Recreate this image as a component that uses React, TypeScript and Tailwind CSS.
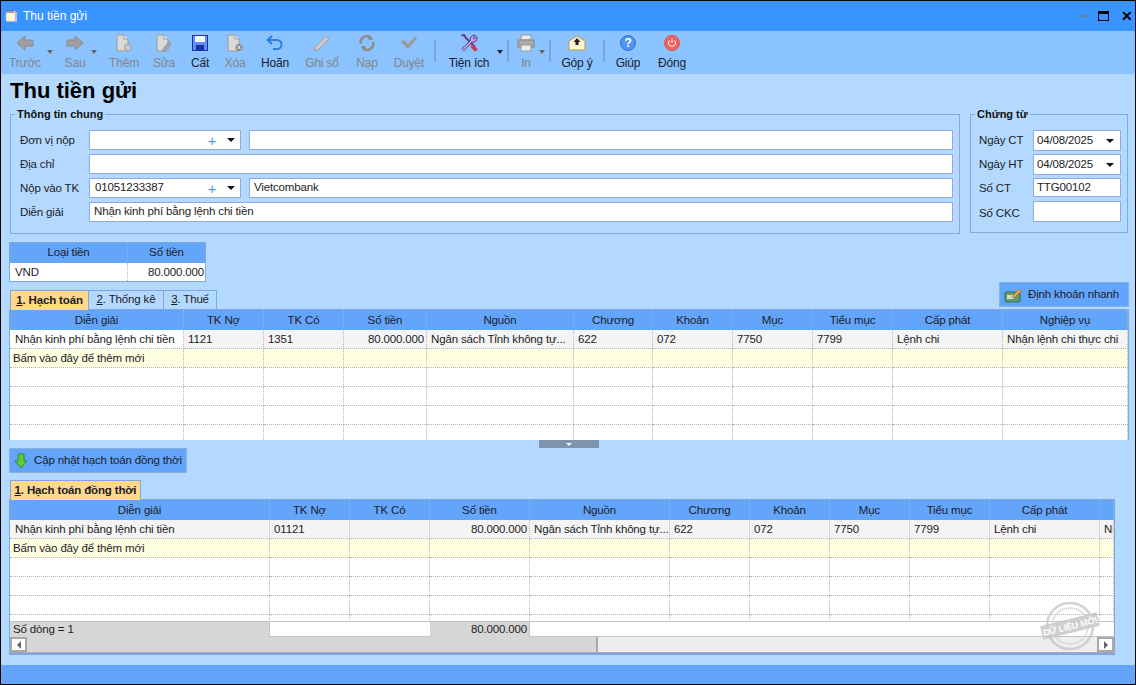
import React from "react";

const G1 = "grid grid-cols-[174px_80px_80px_83px_147px_79px_80px_80px_80px_110px_125px]";
const G2 = "grid grid-cols-[260px_80px_80px_100px_140px_80px_80px_80px_80px_110px_14px]";

const Arrow = ({ flip }: { flip?: boolean }) => (
  <svg width="18" height="16" viewBox="0 0 18 16" className={flip ? "-scale-x-100" : ""}>
    <path d="M1 8 9 1v4h8v6H9v4z" fill="#a0a0a0" stroke="#8c8c8c" />
  </svg>
);
const Doc = ({ children }: { children?: React.ReactNode }) => (
  <svg width="18" height="18" viewBox="0 0 18 18">
    <path d="M2 1h7l4 4v12H2z" fill="#d9d9d9" stroke="#9a9a9a" />
    <path d="M9 1v4h4" fill="#f2f2f2" stroke="#9a9a9a" />
    {children}
  </svg>
);
const icons: Record<string, React.ReactNode> = {
  prev: <Arrow />,
  next: <Arrow flip />,
  add: <Doc><circle cx="13" cy="13.500" r="3.500" fill="#c8c8c8" stroke="#9a9a9a" /></Doc>,
  edit: <Doc><path d="M8 15l6-7 2 2-6 7H8z" fill="#a8a8a8" stroke="#8f8f8f" /></Doc>,
  save: (
    <svg width="16" height="16" viewBox="0 0 16 16">
      <rect x="0.500" y="0.500" width="15" height="15" fill="#5b8ff0" stroke="#1c2fb8" />
      <rect x="3" y="1" width="10" height="6" fill="#f4f6ff" />
      <rect x="4" y="10" width="8" height="5" fill="#20309a" />
    </svg>
  ),
  del: <Doc><circle cx="13" cy="13.500" r="3.500" fill="#8a8a8a" /><path d="M11.500 12l3 3m0-3-3 3" stroke="#fff" /></Doc>,
  undo: (
    <svg width="18" height="16" viewBox="0 0 18 16" fill="none">
      <path d="M6 1 1.500 5 6 9" stroke="#2c7fe0" strokeWidth="2" />
      <path d="M2 5h9a4 4 0 0 1 0 9H7" stroke="#2c7fe0" strokeWidth="2" />
    </svg>
  ),
  post: (
    <svg width="18" height="18" viewBox="0 0 18 18">
      <path d="M2 13 13 2l3 3L5 16l-3.500.500z" fill="#c9c9c9" stroke="#a2a2a2" />
    </svg>
  ),
  reload: (
    <svg width="18" height="18" viewBox="0 0 18 18" fill="none" stroke="#8e8e8e" strokeWidth="2.500">
      <path d="M3 10A6 6 0 0 1 13 4" />
      <path d="M15 8a6 6 0 0 1-10 6" />
      <path d="M11 1.500 15 5l-4 1zM7 16.500 3 13l4-1z" fill="#8e8e8e" strokeWidth="1" />
    </svg>
  ),
  check: (
    <svg width="18" height="16" viewBox="0 0 18 16">
      <path d="M1 7l3-2 4 4 8-8 1 2-9 11z" fill="#9a9a9a" />
    </svg>
  ),
  tools: (
    <svg width="18" height="18" viewBox="0 0 18 18" fill="none">
      <path d="M1.500 1.500 4 1l2 3 9 9" stroke="#5c3d8f" strokeWidth="2" />
      <path d="M16 1.500a4 4 0 0 0-5.500 5L2 14.500 4 16.500 12 8a4 4 0 0 0 5-5l-2.500 2L13 3.800z" fill="#b9a4e8" stroke="#5c3d8f" />
      <path d="M11.500 11.500l5 5" stroke="#d8344a" strokeWidth="3.500" />
    </svg>
  ),
  print: (
    <svg width="18" height="18" viewBox="0 0 18 18">
      <rect x="4" y="1" width="10" height="5" fill="#e8e8e8" stroke="#9a9a9a" />
      <rect x="1" y="6" width="16" height="7" fill="#a9a9a9" stroke="#8a8a8a" />
      <rect x="4" y="11" width="10" height="6" fill="#ededed" stroke="#9a9a9a" />
    </svg>
  ),
  mail: (
    <svg width="18" height="16" viewBox="0 0 18 16">
      <path d="M1 6 9 1l8 5v9H1z" fill="#fff6d8" stroke="#c0983a" />
      <path d="M9 3 12.500 7H10.500v3h-3V7H5.500z" fill="#222" />
    </svg>
  ),
  help: (
    <svg width="16" height="16" viewBox="0 0 16 16">
      <circle cx="8" cy="8" r="7.500" fill="#4f94f4" stroke="#2f74d4" />
      <text x="8" y="12" textAnchor="middle" fontSize="12" fontWeight="700" fill="#fff" fontFamily="Liberation Sans">?</text>
    </svg>
  ),
  power: (
    <svg width="16" height="16" viewBox="0 0 16 16" fill="none">
      <circle cx="8" cy="8" r="7.500" fill="#f06060" stroke="#e84c50" />
      <path d="M5.500 5.500a3.500 3.500 0 1 0 5 0M8 3.500V8" stroke="#fff" />
    </svg>
  ),
};

const ToolBtn = ({ w, icon, label, on, drop, dropOn }: { w: string; icon: string; label: string; on?: boolean; drop?: string; dropOn?: boolean }) => (
  <div className={`relative flex flex-col items-center ${w}`}>
    <div className="flex h-[18px] items-center justify-center mt-[3px]">{icons[icon]}</div>
    <div className={`mt-[4px] text-[12px] tracking-[-0.2px] leading-[14px] whitespace-nowrap ${on ? "text-[#1c1c2c]" : "text-[#858585]"}`}>{label}</div>
    {drop && (
      <div className={`absolute top-[19px] w-0 h-0 border-x-[3px] border-x-transparent border-t-[4px] ${drop} ${dropOn ? "border-t-[#222]" : "border-t-[#666]"}`} />
    )}
  </div>
);
const Sep = ({ cls }: { cls: string }) => <div className={`w-[2px] h-[22px] mt-[9px] bg-[#75a7dd] ${cls}`} />;

const Tri = () => <span className="w-0 h-0 border-x-[4px] border-x-transparent border-t-[4px] border-t-[#111]" />;

const Combo = ({ value, cls }: { value?: string; cls: string }) => (
  <div className={`flex items-center bg-white border border-[#93a6e6] ${cls}`}>
    <span className="flex-1 pl-[5px]">{value}</span>
    <span className="text-[#5a9ae0] text-[15px] text-center leading-none w-[16px] mr-[5px]">+</span>
    <span className="flex w-[15px] pr-[5px] justify-end"><Tri /></span>
  </div>
);
const Field = ({ value, cls }: { value?: string; cls: string }) => (
  <div className={`flex items-center bg-white border border-[#93a6e6] pl-[4px] whitespace-nowrap ${cls}`}>{value}</div>
);
const FormRow = ({ label, children }: { label: string; children: React.ReactNode }) => (
  <div className="flex items-center h-[24px]">
    <div className="w-[69px] mt-[2px]">{label}</div>
    {children}
  </div>
);
const DateRow = ({ label, value, cls, lbl, children }: { label: string; value?: string; cls?: string; lbl?: string; children?: React.ReactNode }) => (
  <div className="flex items-center">
    <div className={`w-[54px] ${lbl ?? "mt-[1px]"}`}>{label}</div>
    <div className={`flex w-[88px] items-center bg-white border border-[#93a6e6] pl-[3px] ${cls}`}>
      <span className="flex-1">{value}</span>
      {children}
    </div>
  </div>
);

const Row = ({ grid, cells, bg, first, firstBg, right }: { grid: string; cells: string[]; bg: string; first?: boolean; firstBg?: string; right: number }) => (
  <div className={`${grid} h-[19px]`}>
    {cells.map((c, i) => (
      <div
        key={i}
        className={`overflow-hidden whitespace-nowrap border-r border-b border-dotted border-[#b4b4b4] leading-[19px] ${i === 0 ? (first ? "pl-[3px]" : "pl-[5px]") : "pl-[4px]"} ${i === right ? "text-right pr-[2px]" : ""} ${i === 0 && firstBg ? firstBg : bg}`}
      >
        {c}
      </div>
    ))}
  </div>
);
const Header = ({ grid, cells }: { grid: string; cells: string[] }) => (
  <div className={`${grid} h-[20px] bg-[#63a5fb]`}>
    {cells.map((c, i) => (
      <div key={i} className="overflow-hidden whitespace-nowrap flex items-center justify-center pt-[1px] border-r border-dotted border-[#8fb4e4]">{c}</div>
    ))}
  </div>
);

const H1 = ["Diễn giải", "TK Nợ", "TK Có", "Số tiền", "Nguồn", "Chương", "Khoản", "Mục", "Tiểu mục", "Cấp phát", "Nghiệp vụ"];
const R1 = ["Nhận kinh phí bằng lệnh chi tiền", "1121", "1351", "80.000.000", "Ngân sách Tỉnh không tự...", "622", "072", "7750", "7799", "Lệnh chi", "Nhận lệnh chi thực chi"];
const R2 = ["Nhận kinh phí bằng lệnh chi tiền", "01121", "", "80.000.000", "Ngân sách Tỉnh không tự...", "622", "072", "7750", "7799", "Lệnh chi", "Nhận"];
const Add = ["Bấm vào đây để thêm mới", "", "", "", "", "", "", "", "", "", ""];
const Empty = ["", "", "", "", "", "", "", "", "", "", ""];

const Tab = ({ label, rest, active, cls }: { label: string; rest: string; active?: boolean; cls: string }) => (
  <div className={`relative z-10 h-[20px] -mb-px flex items-center justify-center whitespace-nowrap border border-[#7fa6de] ${active ? "bg-[#ffd98a] font-bold border-b-0" : ""} ${cls}`}>
    <span><span className="underline">{label}</span>{rest}</span>
  </div>
);

export default function App() {
  return (
    <div className="w-[1136px] h-[685px] flex flex-col overflow-hidden border border-black bg-[#b4d9ff] text-[11.500px] tracking-[-0.15px] text-[#1c1c24] font-['Liberation_Sans',sans-serif]">
      {/* Title bar */}
      <div className="h-[30px] flex items-center bg-[#3894ff] pl-[4px] pr-[5px] shrink-0">
        <svg width="13" height="14" viewBox="0 0 13 14">
          <rect x="2" y="3" width="10" height="10" fill="#c4b4e8" />
          <rect x="1" y="2" width="9" height="10" fill="#fff8d0" stroke="#b8b0d8" strokeWidth="0.500" />
          <path d="M2 1v3M4 1v3M6 1v3M8 1v3" stroke="#5a4a90" />
        </svg>
        <span className="ml-[5px] text-white text-[12px] tracking-normal">Thu tiền gửi</span>
        <div className="ml-auto flex items-center">
          <div className="w-[7px] h-[2px] bg-[#6c7c90]" />
          <div className="ml-[11px] w-[11px] h-[10px] border border-black border-t-[3px]" />
          <span className="ml-[12px] w-[9px] text-[14px] leading-none font-bold text-black">✕</span>
        </div>
      </div>

      {/* Toolbar */}
      <div className="h-[43px] flex bg-[#8ac3ff] shrink-0">
        <ToolBtn w="w-[48px]" icon="prev" label="Trước" drop="right-[-4px]" />
        <ToolBtn w="w-[52px]" icon="next" label="Sau" drop="right-[4px]" />
        <ToolBtn w="w-[46px]" icon="add" label="Thêm" />
        <ToolBtn w="w-[34px]" icon="edit" label="Sửa" />
        <ToolBtn w="w-[38px]" icon="save" label="Cất" on />
        <ToolBtn w="w-[32px]" icon="del" label="Xóa" />
        <ToolBtn w="w-[48px]" icon="undo" label="Hoãn" on />
        <ToolBtn w="w-[46px]" icon="post" label="Ghi sổ" />
        <ToolBtn w="w-[44px]" icon="reload" label="Nạp" />
        <ToolBtn w="w-[40px]" icon="check" label="Duyệt" />
        <Sep cls="ml-[5px] mr-[1px]" />
        <ToolBtn w="w-[64px]" icon="tools" label="Tiện ích" on drop="right-[-2px]" dropOn />
        <Sep cls="ml-[6px]" />
        <ToolBtn w="w-[34px]" icon="print" label="In" drop="right-[-2px]" />
        <Sep cls="ml-[6px]" />
        <ToolBtn w="w-[52px]" icon="mail" label="Góp ý" on />
        <Sep cls="" />
        <ToolBtn w="w-[46px]" icon="help" label="Giúp" on />
        <ToolBtn w="w-[42px]" icon="power" label="Đóng" on />
      </div>

      {/* Body */}
      <div className="flex-1 flex flex-col pl-[8px] pr-[6px] min-h-0">
        <h1 className="ml-[1px] mt-[3px] h-[30px] text-[22px] tracking-normal leading-[27px] font-bold text-black">Thu tiền gửi</h1>

        <div className="ml-[1px] flex gap-[10px]">
          <fieldset className="w-[950px] h-[127px] border border-[#8ba6dc] pl-[9px] pr-[6px] pt-[7px]">
            <legend className="-ml-[5px] px-[2px] text-[11px] tracking-normal font-bold leading-[14px] text-[#111]">Thông tin chung</legend>
            <FormRow label="Đơn vị nộp">
              <Combo cls="w-[152px] h-[20px]" />
              <Field cls="ml-[8px] flex-1 h-[20px]" />
            </FormRow>
            <FormRow label="Địa chỉ">
              <Field cls="flex-1 h-[20px]" />
            </FormRow>
            <FormRow label="Nộp vào TK">
              <Combo cls="w-[152px] h-[20px]" value="01051233387" />
              <Field cls="ml-[8px] flex-1 h-[20px]" value="Vietcombank" />
            </FormRow>
            <FormRow label="Diễn giải">
              <Field cls="flex-1 h-[20px]" value="Nhận kinh phí bằng lệnh chi tiền" />
            </FormRow>
          </fieldset>
          <fieldset className="w-[158px] h-[126px] border border-[#8ba6dc] pl-[8px] pt-[9px] flex flex-col">
            <legend className="-ml-[4px] px-[2px] text-[11px] tracking-normal font-bold leading-[14px] text-[#111]">Chứng từ</legend>
            <div className="flex flex-col gap-[3px]">
              <DateRow label="Ngày CT" value="04/08/2025" cls="h-[21px]"><span className="flex pr-[6px]"><Tri /></span></DateRow>
              <DateRow label="Ngày HT" value="04/08/2025" cls="h-[21px]"><span className="flex pr-[6px]"><Tri /></span></DateRow>
              <DateRow label="Số CT" value="TTG00102" cls="h-[19px]" lbl="mt-[2px]" />
              <DateRow label="Số CKC" cls="h-[21px]" lbl="mt-[5px]" />
            </div>
          </fieldset>
        </div>

        {/* Currency */}
        <div className="mt-[8px] w-[197px] h-[40px] border border-[#7fa6de] shrink-0">
          <div className="grid grid-cols-[118px_77px] h-[20px] bg-[#63a5fb]">
            <div className="flex items-center justify-center border-r border-dotted border-[#8fb4e4]">Loại tiền</div>
            <div className="flex items-center justify-center">Số tiền</div>
          </div>
          <div className="grid grid-cols-[118px_77px] h-[18px] bg-white">
            <div className="pl-[5px] leading-[18px] border-r border-dotted border-[#b4b4b4]">VND</div>
            <div className="text-right pr-[1px] leading-[18px]">80.000.000</div>
          </div>
        </div>

        {/* Tabs + quick button */}
        <div className="h-[27px] flex justify-between shrink-0">
          <div className="ml-[1px] mt-[8px] flex">
            <Tab label="1" rest=". Hạch toán" active cls="w-[79px]" />
            <Tab label="2" rest=". Thống kê" cls="w-[76px] -ml-px" />
            <Tab label="3" rest=". Thuế" cls="w-[54px] -ml-px" />
          </div>
          <div className="w-[130px] h-[25px] flex items-center bg-[#63a5fb] border border-[#8ab0e0] pl-[3px]">
            <svg width="18" height="16" viewBox="0 0 18 16" className="ml-[1px]">
              <rect x="1" y="5" width="15" height="10" rx="1" fill="#5f9a70" stroke="#3c6c50" />
              <rect x="3" y="8" width="7" height="4" fill="#c8e0c0" />
              <path d="M8 10 15 2l2 2-7 7z" fill="#f0b040" stroke="#c03030" strokeWidth="0.500" />
            </svg>
            <span className="ml-[6px] whitespace-nowrap">Định khoản nhanh</span>
          </div>
        </div>

        {/* Grid 1 */}
        <div className="h-[131px] border-x border-t border-[#7fa6de] bg-white overflow-hidden shrink-0">
          <Header grid={G1} cells={H1} />
          <Row grid={G1} cells={R1} bg="bg-[#f4f4f4]" firstBg="bg-white" right={3} />
          <Row grid={G1} cells={Add} bg="bg-[#ffffe2]" first right={-1} />
          <Row grid={G1} cells={Empty} bg="bg-white" right={-1} />
          <Row grid={G1} cells={Empty} bg="bg-white" right={-1} />
          <Row grid={G1} cells={Empty} bg="bg-white" right={-1} />
          <Row grid={G1} cells={Empty} bg="bg-white" right={-1} />
        </div>

        {/* Splitter */}
        <div className="w-[60px] h-[8px] self-center flex justify-center items-center bg-[#7e93ad] shrink-0">
          <span className="w-0 h-0 border-x-[3px] border-x-transparent border-t-[3px] border-t-white" />
        </div>

        {/* Update button */}
        <div className="w-[178px] h-[25px] flex items-center bg-[#63a5fb] border border-[#8ab0e0] shrink-0">
          <svg width="16" height="16" viewBox="0 0 16 16" className="ml-[3px]">
            <path d="M5 1h6v7h3l-6 7-6-7h3z" fill="#5cc83c" stroke="#2f8a2a" strokeLinejoin="round" />
          </svg>
          <span className="ml-[5px] whitespace-nowrap">Cập nhật hạch toán đồng thời</span>
        </div>

        {/* Tab 2 */}
        <div className="mt-[7px] ml-[1px] flex shrink-0">
          <Tab label="1" rest=". Hạch toán đồng thời" active cls="w-[131px]" />
        </div>

        {/* Grid 2 */}
        <div className="relative w-[1106px] h-[156px] flex flex-col border-x border-t border-b-2 border-[#7fa6de] bg-white shrink-0">
          <Header grid={G2} cells={[...H1.slice(0, 10), ""]} />
          <div className="flex-1 overflow-hidden">
            <Row grid={G2} cells={R2} bg="bg-[#f4f4f4]" right={3} />
            <Row grid={G2} cells={Add} bg="bg-[#ffffe2]" first right={-1} />
            <Row grid={G2} cells={Empty} bg="bg-white" right={-1} />
            <Row grid={G2} cells={Empty} bg="bg-white" right={-1} />
            <Row grid={G2} cells={Empty} bg="bg-white" right={-1} />
            <Row grid={G2} cells={Empty} bg="bg-white" right={-1} />
          </div>
          <div className="grid grid-cols-[260px_160px_100px_1fr] h-[16px] border-y border-[#b9c6d4] leading-[15px]">
            <div className="bg-[#d6d6d6] pl-[3px] border-r border-[#b9c6d4]">Số dòng = 1</div>
            <div />
            <div className="bg-[#d6d6d6] text-right pr-[2px] border-r border-[#b9c6d4]">80.000.000</div>
            <div />
          </div>
          <div className="flex h-[16px] bg-[#eeeeee] border-b border-[#a8a8a8]">
            <div className="w-[17px] flex items-center justify-center bg-white border-2 border-[#a8a8a8]">
              <span className="w-0 h-0 border-y-[4px] border-y-transparent border-r-[4px] border-r-[#666]" />
            </div>
            <div className="w-[571px] bg-[#d6d6d6] border-r-2 border-[#a8a8a8]" />
            <div className="flex-1" />
            <div className="w-[17px] flex items-center justify-center bg-white border-2 border-[#a8a8a8]">
              <span className="w-0 h-0 border-y-[4px] border-y-transparent border-l-[4px] border-l-[#666]" />
            </div>
          </div>
          {/* Watermark */}
          <svg width="64" height="52" viewBox="0 0 64 52" className="absolute left-[1028px] top-[100px] pointer-events-none">
            <g opacity="0.8">
              <circle cx="32" cy="26" r="23" fill="none" stroke="#c8c8c8" strokeWidth="2.500" />
              <circle cx="32" cy="26" r="18" fill="none" stroke="#d4d4d4" strokeWidth="1.500" />
              <g transform="rotate(-14 32 26)">
                <rect x="3" y="19" width="58" height="14" fill="#c4c4c4" />
                <text x="32" y="29.500" textAnchor="middle" fontSize="9" fontWeight="700" fill="#fff" fontFamily="Liberation Sans">DỮ LIỆU MỚI</text>
              </g>
            </g>
          </svg>
        </div>
      </div>

      {/* Bottom bar */}
      <div className="h-[19px] bg-[#63a5fb] shrink-0" />
    </div>
  );
}
